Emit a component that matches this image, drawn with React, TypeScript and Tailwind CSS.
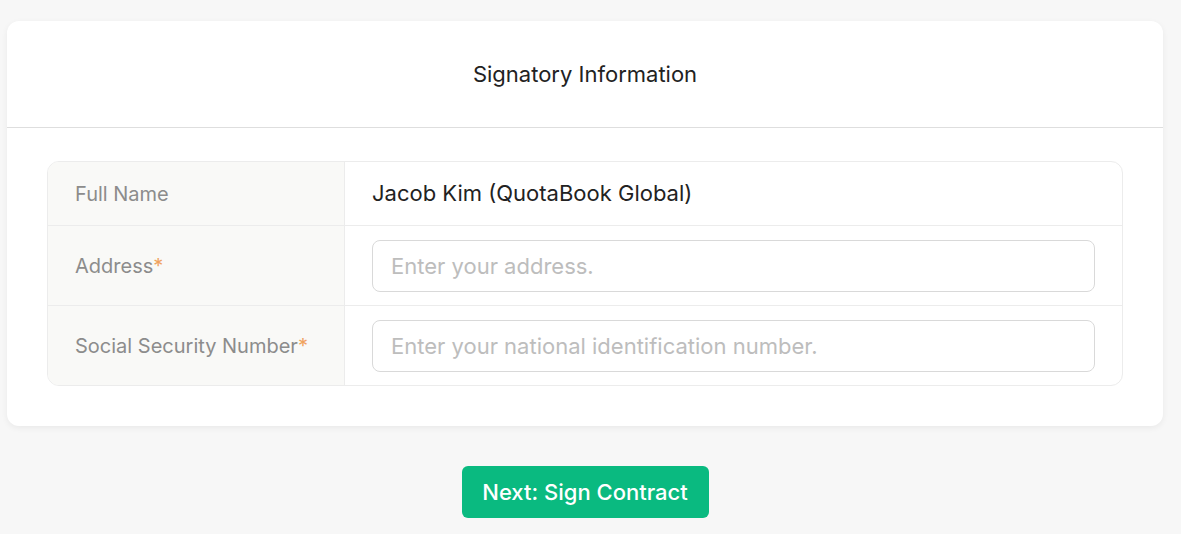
import React from "react";

const rows = [
  { label: "Address", placeholder: "Enter your address.", h: "h-[80px] border-b border-[#ececec]" },
  { label: "Social Security Number", placeholder: "Enter your national identification number.", h: "h-[79px]" },
];

export default function App() {
  return (
    <div
      className="min-h-[534px] bg-[#f7f7f7] pt-[21px] pl-[7px] pr-[18px] text-[22px] text-[#222]"
      style={{ fontFamily: "Inter, 'Noto Sans', sans-serif" }}
    >
      <div className="rounded-[12px] bg-white shadow-[0_2px_6px_rgba(0,0,0,0.06)]">
        <div className="flex h-[107px] items-center justify-center border-b border-[#dedede]">
          <h2 className="text-[22px] font-normal text-[#222]">Signatory Information</h2>
        </div>
        <div className="px-[40px] pt-[33px] pb-[40px]">
          <div className="overflow-hidden rounded-[12px] border border-[#ececec]">
            <div className="flex h-[64px] border-b border-[#ececec]">
              <div className="flex w-[297px] shrink-0 items-center border-r border-[#ececec] bg-[#f9f9f7] px-[27px] pt-[1px] text-[20px] text-[#8c8c8c]">
                Full Name
              </div>
              <div className="flex flex-1 items-center px-[27px] text-[22px] text-[#222]">Jacob Kim (QuotaBook Global)</div>
            </div>
            {rows.map((r) => (
              <div key={r.label} className={`flex ${r.h}`}>
                <div className="flex w-[297px] shrink-0 items-center border-r border-[#ececec] bg-[#f9f9f7] px-[27px] pt-[1px] text-[20px] text-[#8c8c8c]">
                  {r.label}
                  <span className="text-[#f0a25e]">*</span>
                </div>
                <div className="flex flex-1 items-center pl-[27px] pr-[27px]">
                  <input
                    className="h-[52px] w-full rounded-[8px] border border-[#d9d9d9] px-[18px] text-[22px] text-[#222] outline-none placeholder:text-[#bdbdbd]"
                    placeholder={r.placeholder}
                  />
                </div>
              </div>
            ))}
          </div>
        </div>
      </div>
      <div className="flex justify-center pt-[40px]">
        <button className="h-[52px] w-[247px] rounded-[6px] bg-[#0aba80] text-[22px] font-medium text-white">
          Next: Sign Contract
        </button>
      </div>
    </div>
  );
}
